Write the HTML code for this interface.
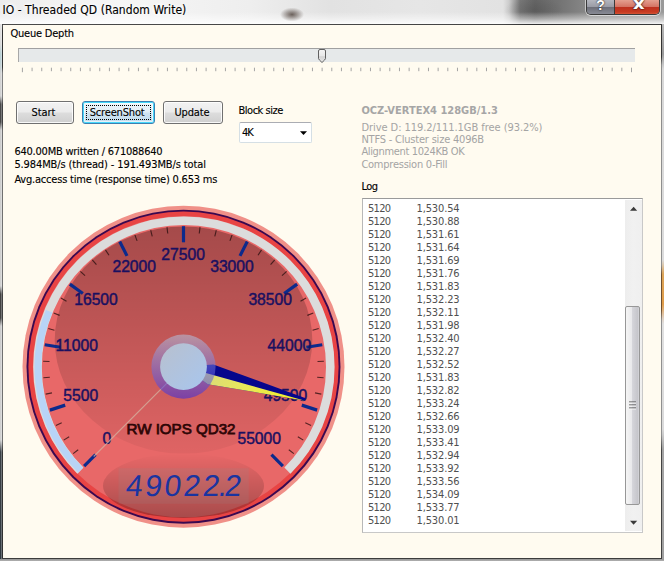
<!DOCTYPE html>
<html><head><meta charset="utf-8"><title>IO - Threaded QD (Random Write)</title>
<style>
html,body{margin:0;padding:0;}
body{width:664px;height:561px;overflow:hidden;position:relative;background:#C8C8C8;font-family:'DejaVu Sans Condensed','DejaVu Sans','Liberation Sans',sans-serif;}
.abs{position:absolute;}
.t{position:absolute;white-space:pre;line-height:1;-webkit-text-stroke:.12px currentColor;}
#titlebar{left:0;top:0;width:664px;height:24px;background:
 radial-gradient(ellipse 12px 7px at 292px 14.5px, rgba(75,62,55,.8), rgba(75,62,55,.45) 45%, rgba(75,62,55,0) 100%),
 linear-gradient(180deg, rgba(255,255,255,0) 0px, rgba(255,255,255,0) 12px, rgba(255,255,255,.45) 19px, rgba(255,255,255,.8) 23px, rgba(255,255,255,.9) 24px),
 radial-gradient(ellipse 30px 12px at 534px 10px, rgba(60,60,60,.25), rgba(60,60,60,0) 100%),
 linear-gradient(90deg, #EDEDED 0px, #F6F6F6 120px, #EEEEEE 250px, #E2E2E2 330px, #E6E6E6 420px, #E2E2E2 503px, #CCCCCC 509px, #787878 520px, #666666 535px, #747474 560px, #8A8A8A 590px, #9A9A9A 664px);}
#client{left:3px;top:25px;width:658px;height:533px;background:#FFFBF0;}
.btn{position:absolute;box-sizing:border-box;height:23px;border:1px solid #707070;border-radius:3px;
 background:linear-gradient(#F2F2F2 0%,#EBEBEB 48%,#DDDDDD 52%,#CFCFCF 100%);box-shadow:inset 0 0 0 1px rgba(255,255,255,.85);}
</style></head><body>
<div id="titlebar" class="abs"></div>
<!-- frame -->
<div class="abs" style="left:0;top:24px;width:2px;height:537px;background:linear-gradient(#E2E2E2 0px,#DADADA 20px,#B8D0D4 30px,#C0D0D4 40px,#D4D4D4 50px,#D0D0D0 72px,#4A4A4A 80px,#484848 98px,#CCCCCC 106px,#D0D0D0 262px,#424242 270px,#424242 294px,#CCCCCC 302px,#D0D0D0 416px,#3A4046 428px,#30383F 537px)"></div>
<div class="abs" style="left:1px;top:24px;width:1px;height:537px;background:rgba(255,255,255,.28)"></div>
<div class="abs" style="left:662px;top:24px;width:2px;height:537px;background:linear-gradient(#B8B8B8 0px,#9A9A9A 30px,#D8D8D8 45px,#DCDCDC 236px,#DCA458 250px,#E09C48 280px,#E0D0C0 294px,#E0E0E0 300px,#DADADA 405px,#A4A4A4 425px,#A0A0A0 537px)"></div>
<div class="abs" style="left:0;top:559px;width:664px;height:2px;background:linear-gradient(#959595,#B0B0B0)"></div>
<div class="abs" style="left:2px;top:24px;width:660px;height:535px;background:#3C3C3C"></div>
<div class="abs" style="left:2px;top:25px;width:1px;height:533px;background:linear-gradient(#505050 0px,#303030 6px,#343434 42px,#808080 48px,#808080 72px,#404040 80px,#404040 98px,#707070 106px,#707070 262px,#404040 270px,#404040 294px,#707070 302px,#707070 416px,#343434 428px,#303030 533px)"></div>
<div class="abs" style="left:661px;top:25px;width:1px;height:533px;background:linear-gradient(#303030 0px,#343434 32px,#8C8C8C 40px,#909090 240px,#705030 250px,#705030 285px,#909090 295px,#909090 410px,#444444 425px,#404040 533px)"></div>
<div class="abs" style="left:3px;top:24px;width:658px;height:1px;background:linear-gradient(90deg,#4A4A4A,#444 500px,#303030 530px,#3A3A3A 664px)"></div>
<div id="client" class="abs"></div>

<div class="abs" style="left:586px;top:0;width:74px;height:15px;border:1px solid #3A3A3A;border-top:none;border-radius:0 0 5px 5px;box-sizing:border-box;overflow:hidden;box-shadow:0 0 0 1px rgba(255,255,255,.55)">
<div class="abs" style="left:0;top:0;width:27px;height:15px;background:linear-gradient(#B4B6BE 0%,#9A9CA6 45%,#6E707A 50%,#8C8E98 100%);border-right:1px solid #3A3A3A"></div>
<div class="abs" style="left:28px;top:0;width:46px;height:15px;background:linear-gradient(#E4A090 0%,#D47464 45%,#BE3220 50%,#C83A20 80%,#D86040 100%)"></div>
<div class="t" style="left:9.3px;top:-2.6px;font:bold 14px 'Liberation Sans',sans-serif;color:#fff;text-shadow:0 0 2px #222,0 0 1px #222">?</div>
<div class="t" style="left:46px;top:-5.6px;font:bold 16px 'DejaVu Sans','Liberation Sans',sans-serif;transform:scaleX(1.12);transform-origin:0 0;color:#fff;text-shadow:0 0 2px #311,0 0 1px #311,0 0 1px #311">x</div>
</div>

<div class="abs" style="left:18px;top:48px;width:617px;height:14px;background:#E6E9EA;border-top:1px solid #A0A0A0;border-left:1px solid #A8A8A8;box-sizing:border-box"></div>
<svg class="abs" style="left:0;top:0" width="664" height="100">

<rect x="21.90" y="67.7" width="1" height="4.5" fill="#A4A4A4"/>
<rect x="31.57" y="67.7" width="1" height="3.5" fill="#A4A4A4"/>
<rect x="41.24" y="67.7" width="1" height="3.5" fill="#A4A4A4"/>
<rect x="50.90" y="67.7" width="1" height="3.5" fill="#A4A4A4"/>
<rect x="60.57" y="67.7" width="1" height="3.5" fill="#A4A4A4"/>
<rect x="70.24" y="67.7" width="1" height="3.5" fill="#A4A4A4"/>
<rect x="79.91" y="67.7" width="1" height="3.5" fill="#A4A4A4"/>
<rect x="89.58" y="67.7" width="1" height="3.5" fill="#A4A4A4"/>
<rect x="99.25" y="67.7" width="1" height="3.5" fill="#A4A4A4"/>
<rect x="108.91" y="67.7" width="1" height="3.5" fill="#A4A4A4"/>
<rect x="118.58" y="67.7" width="1" height="3.5" fill="#A4A4A4"/>
<rect x="128.25" y="67.7" width="1" height="3.5" fill="#A4A4A4"/>
<rect x="137.92" y="67.7" width="1" height="3.5" fill="#A4A4A4"/>
<rect x="147.59" y="67.7" width="1" height="3.5" fill="#A4A4A4"/>
<rect x="157.26" y="67.7" width="1" height="3.5" fill="#A4A4A4"/>
<rect x="166.92" y="67.7" width="1" height="3.5" fill="#A4A4A4"/>
<rect x="176.59" y="67.7" width="1" height="3.5" fill="#A4A4A4"/>
<rect x="186.26" y="67.7" width="1" height="3.5" fill="#A4A4A4"/>
<rect x="195.93" y="67.7" width="1" height="3.5" fill="#A4A4A4"/>
<rect x="205.60" y="67.7" width="1" height="3.5" fill="#A4A4A4"/>
<rect x="215.27" y="67.7" width="1" height="3.5" fill="#A4A4A4"/>
<rect x="224.93" y="67.7" width="1" height="3.5" fill="#A4A4A4"/>
<rect x="234.60" y="67.7" width="1" height="3.5" fill="#A4A4A4"/>
<rect x="244.27" y="67.7" width="1" height="3.5" fill="#A4A4A4"/>
<rect x="253.94" y="67.7" width="1" height="3.5" fill="#A4A4A4"/>
<rect x="263.61" y="67.7" width="1" height="3.5" fill="#A4A4A4"/>
<rect x="273.27" y="67.7" width="1" height="3.5" fill="#A4A4A4"/>
<rect x="282.94" y="67.7" width="1" height="3.5" fill="#A4A4A4"/>
<rect x="292.61" y="67.7" width="1" height="3.5" fill="#A4A4A4"/>
<rect x="302.28" y="67.7" width="1" height="3.5" fill="#A4A4A4"/>
<rect x="311.95" y="67.7" width="1" height="3.5" fill="#A4A4A4"/>
<rect x="321.62" y="67.7" width="1" height="3.5" fill="#A4A4A4"/>
<rect x="331.28" y="67.7" width="1" height="3.5" fill="#A4A4A4"/>
<rect x="340.95" y="67.7" width="1" height="3.5" fill="#A4A4A4"/>
<rect x="350.62" y="67.7" width="1" height="3.5" fill="#A4A4A4"/>
<rect x="360.29" y="67.7" width="1" height="3.5" fill="#A4A4A4"/>
<rect x="369.96" y="67.7" width="1" height="3.5" fill="#A4A4A4"/>
<rect x="379.63" y="67.7" width="1" height="3.5" fill="#A4A4A4"/>
<rect x="389.29" y="67.7" width="1" height="3.5" fill="#A4A4A4"/>
<rect x="398.96" y="67.7" width="1" height="3.5" fill="#A4A4A4"/>
<rect x="408.63" y="67.7" width="1" height="3.5" fill="#A4A4A4"/>
<rect x="418.30" y="67.7" width="1" height="3.5" fill="#A4A4A4"/>
<rect x="427.97" y="67.7" width="1" height="3.5" fill="#A4A4A4"/>
<rect x="437.63" y="67.7" width="1" height="3.5" fill="#A4A4A4"/>
<rect x="447.30" y="67.7" width="1" height="3.5" fill="#A4A4A4"/>
<rect x="456.97" y="67.7" width="1" height="3.5" fill="#A4A4A4"/>
<rect x="466.64" y="67.7" width="1" height="3.5" fill="#A4A4A4"/>
<rect x="476.31" y="67.7" width="1" height="3.5" fill="#A4A4A4"/>
<rect x="485.98" y="67.7" width="1" height="3.5" fill="#A4A4A4"/>
<rect x="495.64" y="67.7" width="1" height="3.5" fill="#A4A4A4"/>
<rect x="505.31" y="67.7" width="1" height="3.5" fill="#A4A4A4"/>
<rect x="514.98" y="67.7" width="1" height="3.5" fill="#A4A4A4"/>
<rect x="524.65" y="67.7" width="1" height="3.5" fill="#A4A4A4"/>
<rect x="534.32" y="67.7" width="1" height="3.5" fill="#A4A4A4"/>
<rect x="543.99" y="67.7" width="1" height="3.5" fill="#A4A4A4"/>
<rect x="553.65" y="67.7" width="1" height="3.5" fill="#A4A4A4"/>
<rect x="563.32" y="67.7" width="1" height="3.5" fill="#A4A4A4"/>
<rect x="572.99" y="67.7" width="1" height="3.5" fill="#A4A4A4"/>
<rect x="582.66" y="67.7" width="1" height="3.5" fill="#A4A4A4"/>
<rect x="592.33" y="67.7" width="1" height="3.5" fill="#A4A4A4"/>
<rect x="602.00" y="67.7" width="1" height="3.5" fill="#A4A4A4"/>
<rect x="611.66" y="67.7" width="1" height="3.5" fill="#A4A4A4"/>
<rect x="621.33" y="67.7" width="1" height="3.5" fill="#A4A4A4"/>
<rect x="631.00" y="67.7" width="1" height="4.5" fill="#A4A4A4"/>
<path d="M318.5 51 Q318.5 49.5 320 49.5 L324 49.5 Q325.5 49.5 325.5 51 L325.5 58.6 Q325.3 59.6 322 62.5 Q318.7 59.6 318.5 58.6 Z" fill="url(#thg)" stroke="#606060" stroke-width="1"/>
<defs><linearGradient id="thg" x1="0" y1="0" x2="0" y2="1"><stop offset="0" stop-color="#F4F4F4"/><stop offset=".5" stop-color="#E8E8E8"/><stop offset=".55" stop-color="#D4D4D4"/><stop offset="1" stop-color="#E8E8E8"/></linearGradient></defs>
</svg>

<div class="btn" style="left:16px;top:101px;width:58px"></div>
<div class="btn" style="left:82px;top:101px;width:73px;border-color:#3C7FB1;box-shadow:inset 0 0 0 1px #48D8FB,inset 0 0 0 2px rgba(255,255,255,.6);background:linear-gradient(#EEF5FA 0%,#E2EEF6 48%,#CFE3F1 52%,#C2DBEC 100%)"><div class="abs" style="left:3px;top:3px;right:3px;bottom:3px;border:1px dotted #000"></div></div>
<div class="btn" style="left:163px;top:101px;width:60px"></div>
<div class="abs" style="left:239px;top:122px;width:73px;height:21px;box-sizing:border-box;background:#fff;border:1px solid #D5DFE5;border-top-color:#ABADB3;border-radius:2px"></div>
<svg class="abs" style="left:299px;top:130px" width="10" height="6"><path d="M1 1.2 L8 1.2 L4.5 5 Z" fill="#000"/></svg>

<div class="abs" style="left:362px;top:198px;width:281px;height:335px;box-sizing:border-box;background:#fff;border:1px solid #C8C8C8;border-top-color:#9A9A9A;border-left-color:#B8B8B8"></div>
<div class="abs" style="left:625px;top:200px;width:17px;height:331px;background:linear-gradient(90deg,#EDEDED,#F1F1F1 50%,#EFEFEF)"></div>
<div class="abs" style="left:625px;top:306px;width:15px;height:199px;box-sizing:border-box;border:1px solid #979797;border-radius:2px;background:linear-gradient(90deg,#F5F5F5 0%,#E9E9EB 45%,#D5D5DA 50%,#C6C6CB 90%,#D8D8DC 100%)"></div>
<svg class="abs" style="left:625px;top:200px" width="17" height="331">
<path d="M5 10.8 L12.2 10.8 L8.6 6.8 Z" fill="#3A3A3A"/>
<path d="M5 320.8 L12.2 320.8 L8.6 324.8 Z" fill="#3A3A3A"/>
<g fill="#4A4A4A"><rect x="4" y="201.5" width="7" height="1"/><rect x="4" y="204.5" width="7" height="1"/><rect x="4" y="207.5" width="7" height="1"/></g>
<g fill="#F8F8F8"><rect x="4" y="202.5" width="7" height="1"/><rect x="4" y="205.5" width="7" height="1"/><rect x="4" y="208.5" width="7" height="1"/></g>
</svg>

<div class="t" style="left:2.40px;top:2.84px;font-weight:normal;font-size:12px;line-height:14.40px;color:#000;letter-spacing:0.055px;text-shadow:0 0 6px #fff,0 0 9px #fff,0 0 12px #fff,0 0 4px #fff;">IO - Threaded QD (Random Write)</div>
<div class="t" style="left:10.40px;top:26.77px;font-weight:normal;font-size:11px;line-height:13.20px;color:#000;letter-spacing:-0.210px;">Queue Depth</div>
<div class="t" style="left:238.40px;top:103.77px;font-weight:normal;font-size:11px;line-height:13.20px;color:#000;letter-spacing:-0.451px;">Block size</div>
<div class="t" style="left:14.40px;top:144.77px;font-weight:normal;font-size:11px;line-height:13.20px;color:#000;letter-spacing:-0.229px;">640.00MB written / 671088640</div>
<div class="t" style="left:14.40px;top:157.77px;font-weight:normal;font-size:11px;line-height:13.20px;color:#000;letter-spacing:-0.113px;">5.984MB/s (thread) - 191.493MB/s total</div>
<div class="t" style="left:14.40px;top:172.77px;font-weight:normal;font-size:11px;line-height:13.20px;color:#000;letter-spacing:-0.204px;">Avg.access time (response time) 0.653 ms</div>
<div class="t" style="left:361.40px;top:103.77px;font-weight:bold;font-size:11px;line-height:13.20px;color:#A6A6A6;letter-spacing:0.002px;-webkit-text-stroke:0;">OCZ-VERTEX4 128GB/1.3</div>
<div class="t" style="left:361.40px;top:120.77px;font-weight:normal;font-size:11px;line-height:13.20px;color:#A4A4A4;letter-spacing:-0.057px;-webkit-text-stroke:0;">Drive D: 119.2/111.1GB free (93.2%)</div>
<div class="t" style="left:361.40px;top:132.77px;font-weight:normal;font-size:11px;line-height:13.20px;color:#A4A4A4;letter-spacing:-0.206px;-webkit-text-stroke:0;">NTFS - Cluster size 4096B</div>
<div class="t" style="left:361.40px;top:144.77px;font-weight:normal;font-size:11px;line-height:13.20px;color:#A4A4A4;letter-spacing:-0.354px;-webkit-text-stroke:0;">Alignment 1024KB OK</div>
<div class="t" style="left:361.40px;top:157.77px;font-weight:normal;font-size:11px;line-height:13.20px;color:#A4A4A4;letter-spacing:-0.242px;-webkit-text-stroke:0;">Compression 0-Fill</div>
<div class="t" style="left:361.40px;top:179.77px;font-weight:normal;font-size:11px;line-height:13.20px;color:#000;letter-spacing:-0.552px;">Log</div>
<div class="t" style="left:31.40px;top:105.77px;font-weight:normal;font-size:11px;line-height:13.20px;color:#000;letter-spacing:-0.034px;">Start</div>
<div class="t" style="left:89.70px;top:105.77px;font-weight:normal;font-size:11px;line-height:13.20px;color:#000;letter-spacing:-0.170px;">ScreenShot</div>
<div class="t" style="left:174.40px;top:105.77px;font-weight:normal;font-size:11px;line-height:13.20px;color:#000;letter-spacing:-0.143px;">Update</div>
<div class="t" style="left:241.90px;top:125.77px;font-weight:normal;font-size:11px;line-height:13.20px;color:#000;letter-spacing:-0.898px;">4K</div>
<div class="t" style="left:368px;top:201.77px;font-size:11px;line-height:13.2px;color:#505050;-webkit-text-stroke:0;letter-spacing:-0.672px">5120</div>
<div class="t" style="left:416.5px;top:201.77px;font-size:11px;line-height:13.2px;color:#505050;-webkit-text-stroke:0;letter-spacing:-0.133px">1,530.54</div>
<div class="t" style="left:368px;top:214.77px;font-size:11px;line-height:13.2px;color:#505050;-webkit-text-stroke:0;letter-spacing:-0.672px">5120</div>
<div class="t" style="left:416.5px;top:214.77px;font-size:11px;line-height:13.2px;color:#505050;-webkit-text-stroke:0;letter-spacing:-0.133px">1,530.88</div>
<div class="t" style="left:368px;top:227.77px;font-size:11px;line-height:13.2px;color:#505050;-webkit-text-stroke:0;letter-spacing:-0.672px">5120</div>
<div class="t" style="left:416.5px;top:227.77px;font-size:11px;line-height:13.2px;color:#505050;-webkit-text-stroke:0;letter-spacing:-0.133px">1,531.61</div>
<div class="t" style="left:368px;top:240.77px;font-size:11px;line-height:13.2px;color:#505050;-webkit-text-stroke:0;letter-spacing:-0.672px">5120</div>
<div class="t" style="left:416.5px;top:240.77px;font-size:11px;line-height:13.2px;color:#505050;-webkit-text-stroke:0;letter-spacing:-0.133px">1,531.64</div>
<div class="t" style="left:368px;top:253.77px;font-size:11px;line-height:13.2px;color:#505050;-webkit-text-stroke:0;letter-spacing:-0.672px">5120</div>
<div class="t" style="left:416.5px;top:253.77px;font-size:11px;line-height:13.2px;color:#505050;-webkit-text-stroke:0;letter-spacing:-0.133px">1,531.69</div>
<div class="t" style="left:368px;top:266.77px;font-size:11px;line-height:13.2px;color:#505050;-webkit-text-stroke:0;letter-spacing:-0.672px">5120</div>
<div class="t" style="left:416.5px;top:266.77px;font-size:11px;line-height:13.2px;color:#505050;-webkit-text-stroke:0;letter-spacing:-0.133px">1,531.76</div>
<div class="t" style="left:368px;top:279.77px;font-size:11px;line-height:13.2px;color:#505050;-webkit-text-stroke:0;letter-spacing:-0.672px">5120</div>
<div class="t" style="left:416.5px;top:279.77px;font-size:11px;line-height:13.2px;color:#505050;-webkit-text-stroke:0;letter-spacing:-0.133px">1,531.83</div>
<div class="t" style="left:368px;top:292.77px;font-size:11px;line-height:13.2px;color:#505050;-webkit-text-stroke:0;letter-spacing:-0.672px">5120</div>
<div class="t" style="left:416.5px;top:292.77px;font-size:11px;line-height:13.2px;color:#505050;-webkit-text-stroke:0;letter-spacing:-0.133px">1,532.23</div>
<div class="t" style="left:368px;top:305.77px;font-size:11px;line-height:13.2px;color:#505050;-webkit-text-stroke:0;letter-spacing:-0.672px">5120</div>
<div class="t" style="left:416.5px;top:305.77px;font-size:11px;line-height:13.2px;color:#505050;-webkit-text-stroke:0;letter-spacing:-0.133px">1,532.11</div>
<div class="t" style="left:368px;top:318.77px;font-size:11px;line-height:13.2px;color:#505050;-webkit-text-stroke:0;letter-spacing:-0.672px">5120</div>
<div class="t" style="left:416.5px;top:318.77px;font-size:11px;line-height:13.2px;color:#505050;-webkit-text-stroke:0;letter-spacing:-0.133px">1,531.98</div>
<div class="t" style="left:368px;top:331.77px;font-size:11px;line-height:13.2px;color:#505050;-webkit-text-stroke:0;letter-spacing:-0.672px">5120</div>
<div class="t" style="left:416.5px;top:331.77px;font-size:11px;line-height:13.2px;color:#505050;-webkit-text-stroke:0;letter-spacing:-0.133px">1,532.40</div>
<div class="t" style="left:368px;top:344.77px;font-size:11px;line-height:13.2px;color:#505050;-webkit-text-stroke:0;letter-spacing:-0.672px">5120</div>
<div class="t" style="left:416.5px;top:344.77px;font-size:11px;line-height:13.2px;color:#505050;-webkit-text-stroke:0;letter-spacing:-0.133px">1,532.27</div>
<div class="t" style="left:368px;top:357.77px;font-size:11px;line-height:13.2px;color:#505050;-webkit-text-stroke:0;letter-spacing:-0.672px">5120</div>
<div class="t" style="left:416.5px;top:357.77px;font-size:11px;line-height:13.2px;color:#505050;-webkit-text-stroke:0;letter-spacing:-0.133px">1,532.52</div>
<div class="t" style="left:368px;top:370.77px;font-size:11px;line-height:13.2px;color:#505050;-webkit-text-stroke:0;letter-spacing:-0.672px">5120</div>
<div class="t" style="left:416.5px;top:370.77px;font-size:11px;line-height:13.2px;color:#505050;-webkit-text-stroke:0;letter-spacing:-0.133px">1,531.83</div>
<div class="t" style="left:368px;top:383.77px;font-size:11px;line-height:13.2px;color:#505050;-webkit-text-stroke:0;letter-spacing:-0.672px">5120</div>
<div class="t" style="left:416.5px;top:383.77px;font-size:11px;line-height:13.2px;color:#505050;-webkit-text-stroke:0;letter-spacing:-0.133px">1,532.82</div>
<div class="t" style="left:368px;top:396.77px;font-size:11px;line-height:13.2px;color:#505050;-webkit-text-stroke:0;letter-spacing:-0.672px">5120</div>
<div class="t" style="left:416.5px;top:396.77px;font-size:11px;line-height:13.2px;color:#505050;-webkit-text-stroke:0;letter-spacing:-0.133px">1,533.24</div>
<div class="t" style="left:368px;top:409.77px;font-size:11px;line-height:13.2px;color:#505050;-webkit-text-stroke:0;letter-spacing:-0.672px">5120</div>
<div class="t" style="left:416.5px;top:409.77px;font-size:11px;line-height:13.2px;color:#505050;-webkit-text-stroke:0;letter-spacing:-0.133px">1,532.66</div>
<div class="t" style="left:368px;top:422.77px;font-size:11px;line-height:13.2px;color:#505050;-webkit-text-stroke:0;letter-spacing:-0.672px">5120</div>
<div class="t" style="left:416.5px;top:422.77px;font-size:11px;line-height:13.2px;color:#505050;-webkit-text-stroke:0;letter-spacing:-0.133px">1,533.09</div>
<div class="t" style="left:368px;top:435.77px;font-size:11px;line-height:13.2px;color:#505050;-webkit-text-stroke:0;letter-spacing:-0.672px">5120</div>
<div class="t" style="left:416.5px;top:435.77px;font-size:11px;line-height:13.2px;color:#505050;-webkit-text-stroke:0;letter-spacing:-0.133px">1,533.41</div>
<div class="t" style="left:368px;top:448.77px;font-size:11px;line-height:13.2px;color:#505050;-webkit-text-stroke:0;letter-spacing:-0.672px">5120</div>
<div class="t" style="left:416.5px;top:448.77px;font-size:11px;line-height:13.2px;color:#505050;-webkit-text-stroke:0;letter-spacing:-0.133px">1,532.94</div>
<div class="t" style="left:368px;top:461.77px;font-size:11px;line-height:13.2px;color:#505050;-webkit-text-stroke:0;letter-spacing:-0.672px">5120</div>
<div class="t" style="left:416.5px;top:461.77px;font-size:11px;line-height:13.2px;color:#505050;-webkit-text-stroke:0;letter-spacing:-0.133px">1,533.92</div>
<div class="t" style="left:368px;top:474.77px;font-size:11px;line-height:13.2px;color:#505050;-webkit-text-stroke:0;letter-spacing:-0.672px">5120</div>
<div class="t" style="left:416.5px;top:474.77px;font-size:11px;line-height:13.2px;color:#505050;-webkit-text-stroke:0;letter-spacing:-0.133px">1,533.56</div>
<div class="t" style="left:368px;top:487.77px;font-size:11px;line-height:13.2px;color:#505050;-webkit-text-stroke:0;letter-spacing:-0.672px">5120</div>
<div class="t" style="left:416.5px;top:487.77px;font-size:11px;line-height:13.2px;color:#505050;-webkit-text-stroke:0;letter-spacing:-0.133px">1,534.09</div>
<div class="t" style="left:368px;top:500.77px;font-size:11px;line-height:13.2px;color:#505050;-webkit-text-stroke:0;letter-spacing:-0.672px">5120</div>
<div class="t" style="left:416.5px;top:500.77px;font-size:11px;line-height:13.2px;color:#505050;-webkit-text-stroke:0;letter-spacing:-0.133px">1,533.77</div>
<div class="t" style="left:368px;top:513.77px;font-size:11px;line-height:13.2px;color:#505050;-webkit-text-stroke:0;letter-spacing:-0.672px">5120</div>
<div class="t" style="left:416.5px;top:513.77px;font-size:11px;line-height:13.2px;color:#505050;-webkit-text-stroke:0;letter-spacing:-0.133px">1,530.01</div>
<svg class="abs" style="left:0;top:0" width="664" height="561" viewBox="0 0 664 561">
<defs>
<linearGradient id="gl1" x1="0" y1="0" x2="0" y2="1"><stop offset="0" stop-color="#000" stop-opacity=".29"/><stop offset="1" stop-color="#000" stop-opacity=".04"/></linearGradient>
<linearGradient id="gl2" x1="0" y1="0" x2="0" y2="1"><stop offset="0" stop-color="#000" stop-opacity="0"/><stop offset="1" stop-color="#000" stop-opacity=".28"/></linearGradient>
<linearGradient id="knobO" x1="0" y1="0" x2="0" y2="1"><stop offset="0" stop-color="#B4C6E0"/><stop offset="1" stop-color="#3428E0"/></linearGradient>
<linearGradient id="knobI" x1="0" y1="0" x2="1" y2="1"><stop offset="0" stop-color="#B8C0CE"/><stop offset="1" stop-color="#A8C6EE"/></linearGradient>
<linearGradient id="ndl" gradientUnits="userSpaceOnUse" x1="305" y1="400.7" x2="183.5" y2="366.7"><stop offset="0" stop-color="#F4F020"/><stop offset=".55" stop-color="#E6E660"/><stop offset="1" stop-color="#D2D288"/></linearGradient>
</defs>
<circle cx="183.5" cy="366.7" r="161" fill="#F09088"/>
<circle cx="183.5" cy="366.7" r="157.0" fill="#3A0850"/>
<circle cx="183.5" cy="366.7" r="155.1" fill="#E84444"/>
<circle cx="183.5" cy="366.7" r="150.6" fill="#E86868"/>
<path d="M80.38 470.62 A146.4 146.4 0 1 1 287.42 470.62" fill="none" stroke="#DCDCDC" stroke-width="8.6"/>
<path d="M80.73 470.27 A145.9 145.9 0 0 1 49.11 311.27" fill="none" stroke="#B8D4F6" stroke-width="6.9"/>
<ellipse cx="183.5" cy="340.1" rx="128.8" ry="113.5" fill="url(#gl1)"/>
<ellipse cx="183.5" cy="485.8" rx="80.5" ry="32.2" fill="url(#gl2)"/>
<rect x="118.5" y="468.2" width="130.2" height="35.6" fill="#909090" fill-opacity=".16"/>
<line x1="84.15" y1="466.05" x2="95.54" y2="454.66" stroke="#0C2A8C" stroke-width="3.2"/>
<line x1="73.16" y1="453.68" x2="78.19" y2="449.72" stroke="#2A1010" stroke-width="1.1" stroke-opacity=".78"/>
<line x1="63.70" y1="440.11" x2="69.16" y2="436.77" stroke="#2A1010" stroke-width="1.1" stroke-opacity=".78"/>
<line x1="55.91" y1="425.52" x2="61.72" y2="422.84" stroke="#2A1010" stroke-width="1.1" stroke-opacity=".78"/>
<line x1="49.88" y1="410.12" x2="65.19" y2="405.14" stroke="#0C2A8C" stroke-width="3.2"/>
<line x1="45.70" y1="394.11" x2="51.98" y2="392.86" stroke="#2A1010" stroke-width="1.1" stroke-opacity=".78"/>
<line x1="43.43" y1="377.72" x2="49.81" y2="377.22" stroke="#2A1010" stroke-width="1.1" stroke-opacity=".78"/>
<line x1="43.11" y1="361.18" x2="49.50" y2="361.44" stroke="#2A1010" stroke-width="1.1" stroke-opacity=".78"/>
<line x1="44.73" y1="344.72" x2="60.63" y2="347.24" stroke="#0C2A8C" stroke-width="3.2"/>
<line x1="48.28" y1="328.56" x2="54.44" y2="330.30" stroke="#2A1010" stroke-width="1.1" stroke-opacity=".78"/>
<line x1="53.69" y1="312.93" x2="59.61" y2="315.38" stroke="#2A1010" stroke-width="1.1" stroke-opacity=".78"/>
<line x1="60.91" y1="298.05" x2="66.50" y2="301.18" stroke="#2A1010" stroke-width="1.1" stroke-opacity=".78"/>
<line x1="69.83" y1="284.12" x2="82.86" y2="293.58" stroke="#0C2A8C" stroke-width="3.2"/>
<line x1="80.33" y1="271.33" x2="85.03" y2="275.67" stroke="#2A1010" stroke-width="1.1" stroke-opacity=".78"/>
<line x1="92.25" y1="259.86" x2="96.41" y2="264.73" stroke="#2A1010" stroke-width="1.1" stroke-opacity=".78"/>
<line x1="105.44" y1="249.88" x2="109.00" y2="255.20" stroke="#2A1010" stroke-width="1.1" stroke-opacity=".78"/>
<line x1="119.71" y1="241.51" x2="127.02" y2="255.86" stroke="#0C2A8C" stroke-width="3.2"/>
<line x1="134.87" y1="234.88" x2="137.09" y2="240.89" stroke="#2A1010" stroke-width="1.1" stroke-opacity=".78"/>
<line x1="150.70" y1="230.08" x2="152.20" y2="236.31" stroke="#2A1010" stroke-width="1.1" stroke-opacity=".78"/>
<line x1="166.99" y1="227.17" x2="167.74" y2="233.53" stroke="#2A1010" stroke-width="1.1" stroke-opacity=".78"/>
<line x1="183.50" y1="226.20" x2="183.50" y2="242.30" stroke="#0C2A8C" stroke-width="3.2"/>
<line x1="200.01" y1="227.17" x2="199.26" y2="233.53" stroke="#2A1010" stroke-width="1.1" stroke-opacity=".78"/>
<line x1="216.30" y1="230.08" x2="214.80" y2="236.31" stroke="#2A1010" stroke-width="1.1" stroke-opacity=".78"/>
<line x1="232.13" y1="234.88" x2="229.91" y2="240.89" stroke="#2A1010" stroke-width="1.1" stroke-opacity=".78"/>
<line x1="247.29" y1="241.51" x2="239.98" y2="255.86" stroke="#0C2A8C" stroke-width="3.2"/>
<line x1="261.56" y1="249.88" x2="258.00" y2="255.20" stroke="#2A1010" stroke-width="1.1" stroke-opacity=".78"/>
<line x1="274.75" y1="259.86" x2="270.59" y2="264.73" stroke="#2A1010" stroke-width="1.1" stroke-opacity=".78"/>
<line x1="286.67" y1="271.33" x2="281.97" y2="275.67" stroke="#2A1010" stroke-width="1.1" stroke-opacity=".78"/>
<line x1="297.17" y1="284.12" x2="284.14" y2="293.58" stroke="#0C2A8C" stroke-width="3.2"/>
<line x1="306.09" y1="298.05" x2="300.50" y2="301.18" stroke="#2A1010" stroke-width="1.1" stroke-opacity=".78"/>
<line x1="313.31" y1="312.93" x2="307.39" y2="315.38" stroke="#2A1010" stroke-width="1.1" stroke-opacity=".78"/>
<line x1="318.72" y1="328.56" x2="312.56" y2="330.30" stroke="#2A1010" stroke-width="1.1" stroke-opacity=".78"/>
<line x1="322.27" y1="344.72" x2="306.37" y2="347.24" stroke="#0C2A8C" stroke-width="3.2"/>
<line x1="323.89" y1="361.18" x2="317.50" y2="361.44" stroke="#2A1010" stroke-width="1.1" stroke-opacity=".78"/>
<line x1="323.57" y1="377.72" x2="317.19" y2="377.22" stroke="#2A1010" stroke-width="1.1" stroke-opacity=".78"/>
<line x1="321.30" y1="394.11" x2="315.02" y2="392.86" stroke="#2A1010" stroke-width="1.1" stroke-opacity=".78"/>
<line x1="317.12" y1="410.12" x2="301.81" y2="405.14" stroke="#0C2A8C" stroke-width="3.2"/>
<line x1="311.09" y1="425.52" x2="305.28" y2="422.84" stroke="#2A1010" stroke-width="1.1" stroke-opacity=".78"/>
<line x1="303.30" y1="440.11" x2="297.84" y2="436.77" stroke="#2A1010" stroke-width="1.1" stroke-opacity=".78"/>
<line x1="293.84" y1="453.68" x2="288.81" y2="449.72" stroke="#2A1010" stroke-width="1.1" stroke-opacity=".78"/>
<line x1="282.85" y1="466.05" x2="271.46" y2="454.66" stroke="#0C2A8C" stroke-width="3.2"/>
<text x="106.98" y="444.04" text-anchor="middle" font-family="'Liberation Sans',sans-serif" font-size="15.7" fill="#1A1060" stroke="#1A1060" stroke-width=".45">0</text>
<text x="80.71" y="401.18" text-anchor="middle" font-family="'Liberation Sans',sans-serif" font-size="15.7" fill="#1A1060" stroke="#1A1060" stroke-width=".45">5500</text>
<text x="76.77" y="351.07" text-anchor="middle" font-family="'Liberation Sans',sans-serif" font-size="15.7" fill="#1A1060" stroke="#1A1060" stroke-width=".45">11000</text>
<text x="96.00" y="304.64" text-anchor="middle" font-family="'Liberation Sans',sans-serif" font-size="15.7" fill="#1A1060" stroke="#1A1060" stroke-width=".45">16500</text>
<text x="134.22" y="271.99" text-anchor="middle" font-family="'Liberation Sans',sans-serif" font-size="15.7" fill="#1A1060" stroke="#1A1060" stroke-width=".45">22000</text>
<text x="183.10" y="260.26" text-anchor="middle" font-family="'Liberation Sans',sans-serif" font-size="15.7" fill="#1A1060" stroke="#1A1060" stroke-width=".45">27500</text>
<text x="231.98" y="271.99" text-anchor="middle" font-family="'Liberation Sans',sans-serif" font-size="15.7" fill="#1A1060" stroke="#1A1060" stroke-width=".45">33000</text>
<text x="270.20" y="304.64" text-anchor="middle" font-family="'Liberation Sans',sans-serif" font-size="15.7" fill="#1A1060" stroke="#1A1060" stroke-width=".45">38500</text>
<text x="289.43" y="351.07" text-anchor="middle" font-family="'Liberation Sans',sans-serif" font-size="15.7" fill="#1A1060" stroke="#1A1060" stroke-width=".45">44000</text>
<text x="285.49" y="401.18" text-anchor="middle" font-family="'Liberation Sans',sans-serif" font-size="15.7" fill="#1A1060" stroke="#1A1060" stroke-width=".45">49500</text>
<text x="259.22" y="444.04" text-anchor="middle" font-family="'Liberation Sans',sans-serif" font-size="15.7" fill="#1A1060" stroke="#1A1060" stroke-width=".45">55000</text>
<text x="181" y="434" text-anchor="middle" font-family="'Liberation Sans',sans-serif" font-size="14.7" fill="#2E0606" stroke="#2E0606" stroke-width=".75" textLength="109" lengthAdjust="spacingAndGlyphs">RW IOPS QD32</text>
<line x1="183.5" y1="366.7" x2="93.70" y2="456.50" stroke="#D4B4A2" stroke-width="1.1" stroke-opacity=".75"/>
<polygon points="305.02,400.75 207.80,384.13 183.5,366.7 213.31,364.43 305.68,398.32" fill="#06068C"/>
<polygon points="305.02,400.75 207.80,384.13 183.5,366.7" fill="url(#ndl)"/>
<circle cx="183.5" cy="366.7" r="32.1" fill="url(#knobO)" fill-opacity=".54"/>
<circle cx="183.5" cy="366.7" r="23.4" fill="url(#knobI)"/>
<g transform="translate(0,495.8) skewX(-6.6) scale(1.0,1)"><text x="125.00 144.30 163.60 182.80 202.10 217.60 223.80" y="0" font-family="'Liberation Sans',sans-serif" font-size="30" fill="#1A34A0">49022.2</text></g>
</svg>
</body></html>
